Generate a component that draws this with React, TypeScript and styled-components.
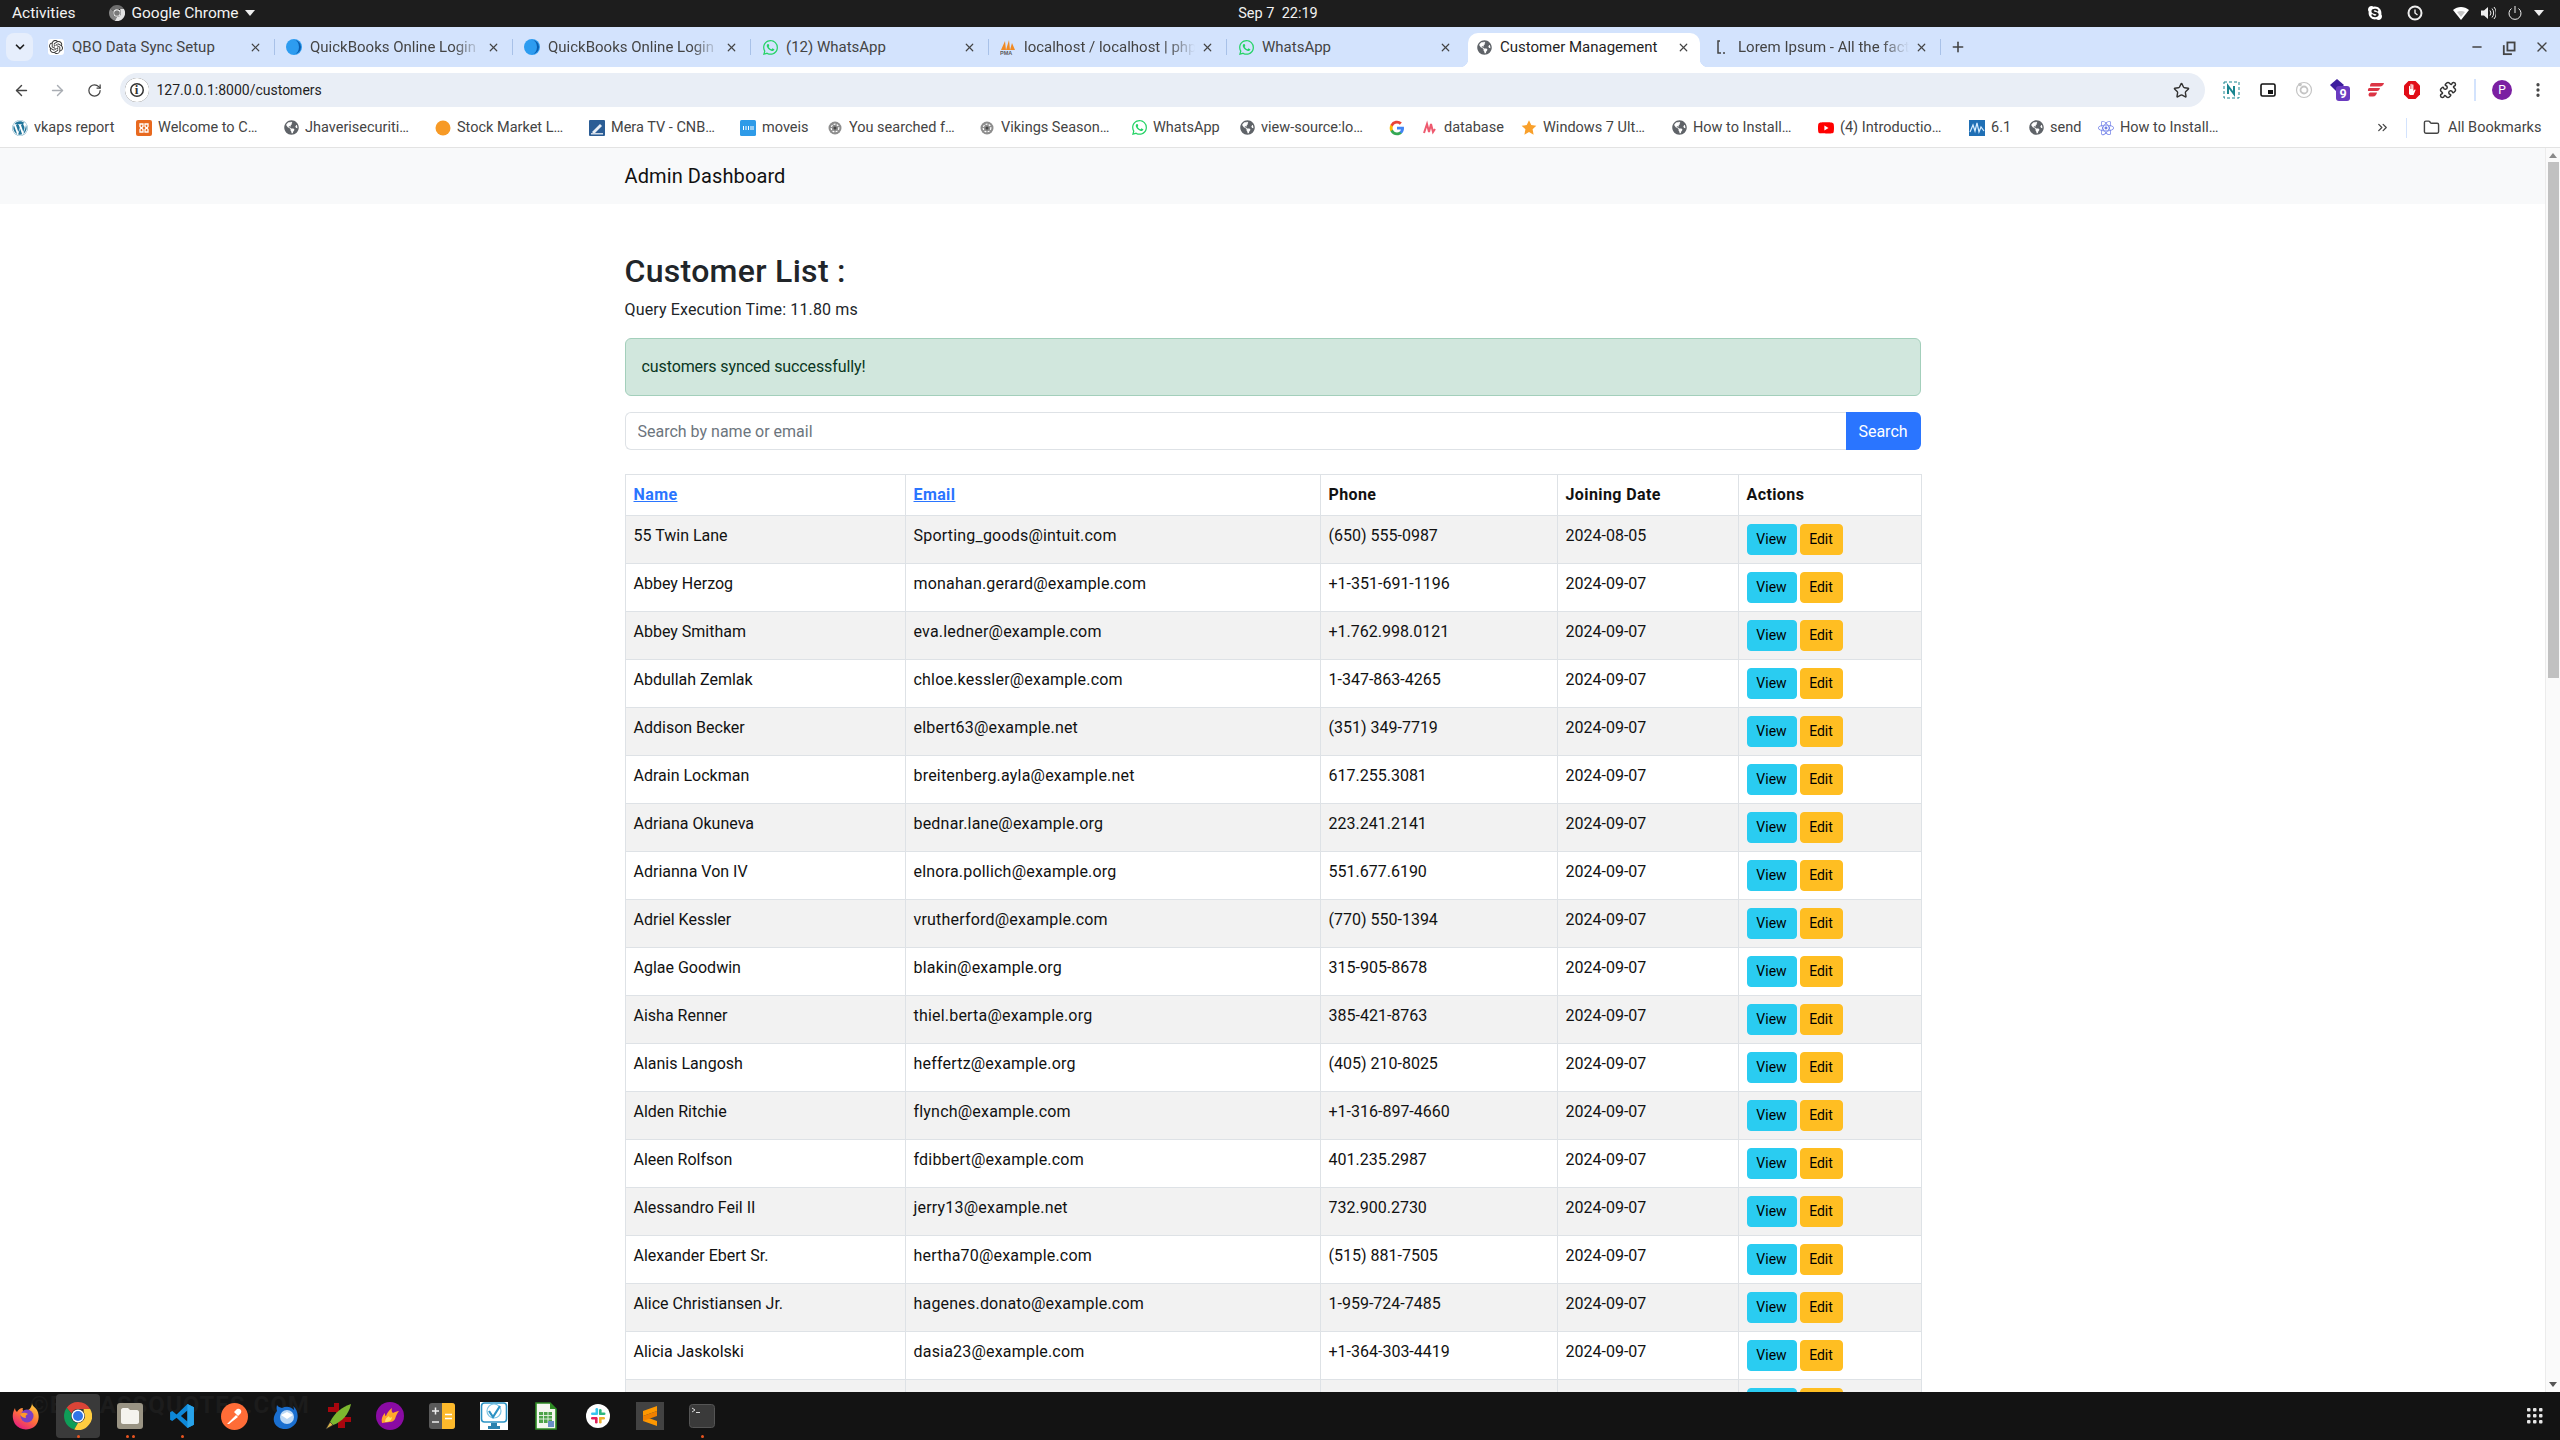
import React from "react";
import styled, { createGlobalStyle } from "styled-components";
import {
  ArrowLeft,
  ArrowRight,
  ChevronDown,
  ChevronsRight,
  Folder,
  Minus,
  MoreVertical,
  Plus,
  Puzzle,
  RotateCw,
  Star,
  X,
} from "lucide-react";
import { FaGlobeAmericas, FaSkype, FaWordpress } from "react-icons/fa";
import { SiOpenai, SiReact, SiWhatsapp, SiYoutube } from "react-icons/si";

const FONT = `Roboto, "Noto Sans", sans-serif`;

const GlobalStyle = createGlobalStyle`
  html, body {
    margin: 0;
    padding: 0;
    height: 100%;
    overflow: hidden;
    background: #fff;
  }
  * { box-sizing: border-box; }
  body {
    font-family: ${FONT};
    font-size: 16px;
    color: #212529;
  }
`;

const customers = [
  ["55 Twin Lane", "Sporting_goods@intuit.com", "(650) 555-0987", "2024-08-05"],
  ["Abbey Herzog", "monahan.gerard@example.com", "+1-351-691-1196", "2024-09-07"],
  ["Abbey Smitham", "eva.ledner@example.com", "+1.762.998.0121", "2024-09-07"],
  ["Abdullah Zemlak", "chloe.kessler@example.com", "1-347-863-4265", "2024-09-07"],
  ["Addison Becker", "elbert63@example.net", "(351) 349-7719", "2024-09-07"],
  ["Adrain Lockman", "breitenberg.ayla@example.net", "617.255.3081", "2024-09-07"],
  ["Adriana Okuneva", "bednar.lane@example.org", "223.241.2141", "2024-09-07"],
  ["Adrianna Von IV", "elnora.pollich@example.org", "551.677.6190", "2024-09-07"],
  ["Adriel Kessler", "vrutherford@example.com", "(770) 550-1394", "2024-09-07"],
  ["Aglae Goodwin", "blakin@example.org", "315-905-8678", "2024-09-07"],
  ["Aisha Renner", "thiel.berta@example.org", "385-421-8763", "2024-09-07"],
  ["Alanis Langosh", "heffertz@example.org", "(405) 210-8025", "2024-09-07"],
  ["Alden Ritchie", "flynch@example.com", "+1-316-897-4660", "2024-09-07"],
  ["Aleen Rolfson", "fdibbert@example.com", "401.235.2987", "2024-09-07"],
  ["Alessandro Feil II", "jerry13@example.net", "732.900.2730", "2024-09-07"],
  ["Alexander Ebert Sr.", "hertha70@example.com", "(515) 881-7505", "2024-09-07"],
  ["Alice Christiansen Jr.", "hagenes.donato@example.com", "1-959-724-7485", "2024-09-07"],
  ["Alicia Jaskolski", "dasia23@example.com", "+1-364-303-4419", "2024-09-07"],
  ["", "", "", ""],
];

/* ---------- small favicons ---------- */

const Globe = () => <FaGlobeAmericas size={15} color="#5f6368" />;

const QuickBooksDrop = () => (
  <svg width="16" height="16" viewBox="0 0 16 16">
    <circle cx="8" cy="8" r="8" fill="#2d9cf0" />
    <path d="M8 1a7 7 0 0 1 0 14 5 7 0 0 0 0-14z" fill="#0b5cad" />
  </svg>
);

const Pma = () => (
  <svg width="16" height="16" viewBox="0 0 16 16">
    <path d="M1 11 5 2l1 9zM6 11l3-10 1 10zM10 11l2-7 3 7z" fill="#f08a24" />
    <text x="0" y="16" fontSize="5.5" fontWeight="700" fill="#5a5a5a" fontFamily="Liberation Sans, sans-serif">PMA</text>
  </svg>
);

const LoremMark = () => (
  <svg width="16" height="16" viewBox="0 0 16 16" fill="none" stroke="#444" strokeWidth="1.5">
    <path d="M6 2H4v12h3M9 14h2" />
  </svg>
);

const Xampp = () => (
  <svg width="16" height="16" viewBox="0 0 16 16">
    <rect width="16" height="16" rx="2" fill="#e8691f" />
    <path d="M4 4h3v2.500L5.500 8 7 9.500V12H4V9.500L5 8 4 6.500zM12 4H9v2.500L10.500 8 9 9.500V12h3V9.500L11 8l1-1.500z" fill="none" stroke="#fff" strokeWidth="1.300" />
  </svg>
);

const OrangeDot = () => (
  <svg width="16" height="16" viewBox="0 0 16 16">
    <circle cx="8" cy="8" r="7.500" fill="#f79a26" />
  </svg>
);

const MeraTv = () => (
  <svg width="16" height="16" viewBox="0 0 16 16">
    <rect width="16" height="16" rx="1" fill="#2b5d95" />
    <path d="M3 12 11 4l2 2-8 8z" fill="#e8eef5" />
    <rect x="2" y="13" width="12" height="1.500" fill="#cfd9e5" />
  </svg>
);

const Moveis = () => (
  <svg width="16" height="16" viewBox="0 0 16 16">
    <rect width="16" height="16" rx="1.500" fill="#2e9be8" />
    <path d="M3.500 6v4M6 6v4M8.500 6v4M11 6v4M13 6v4" stroke="#fff" strokeWidth="1" />
  </svg>
);

const Film = () => (
  <svg width="16" height="16" viewBox="0 0 16 16">
    <circle cx="8" cy="8" r="6.500" fill="#8d8d8d" />
    <circle cx="8" cy="8" r="3.800" fill="none" stroke="#fff" strokeWidth="1.200" strokeDasharray="2 1.200" />
    <circle cx="8" cy="8" r="1.500" fill="#444" />
  </svg>
);

const GoogleG = () => (
  <svg width="16" height="16" viewBox="0 0 24 24">
    <path d="M22.500 12.200c0-.8-.1-1.500-.2-2.200H12v4.200h5.900a5 5 0 0 1-2.200 3.300v2.700h3.500c2.100-1.900 3.300-4.700 3.300-8z" fill="#4285f4" />
    <path d="M12 23c3 0 5.400-1 7.200-2.700l-3.500-2.700c-1 .7-2.200 1-3.700 1-2.900 0-5.300-1.900-6.200-4.500H2.200v2.800A11 11 0 0 0 12 23z" fill="#34a853" />
    <path d="M5.800 14.100a6.600 6.600 0 0 1 0-4.200V7.100H2.200a11 11 0 0 0 0 9.800z" fill="#fbbc05" />
    <path d="M12 5.400c1.600 0 3.100.6 4.200 1.600l3.100-3.100A11 11 0 0 0 2.200 7.100l3.600 2.800C6.700 7.300 9.100 5.400 12 5.400z" fill="#ea4335" />
  </svg>
);

const DatabaseMark = () => (
  <svg width="16" height="16" viewBox="0 0 16 16" fill="none" stroke="#ee5a6f" strokeWidth="2">
    <path d="M2 13 5 4l2 8 2-8 2 8 2-3" />
  </svg>
);

const StarFav = () => (
  <svg width="17" height="17" viewBox="0 0 24 24">
    <path d="m12 1 3.400 7.300 7.600 1-5.600 5.400 1.500 8L12 18.800 5.100 22.700l1.500-8L1 9.300l7.600-1z" fill="#f9a02b" />
  </svg>
);

const Chart61 = () => (
  <svg width="16" height="16" viewBox="0 0 16 16">
    <rect width="16" height="16" fill="#1f6fb5" />
    <path d="M1 12 4 5l2 6 2-8 2 9 2-5 3 4" fill="none" stroke="#d5ecff" strokeWidth="1.200" />
  </svg>
);

/* ---------- toolbar extensions ---------- */

const NotionClip = () => (
  <svg width="18" height="18" viewBox="0 0 18 18" fill="none">
    <rect x="1" y="1" width="15" height="16" stroke="#19858f" strokeWidth="1" strokeDasharray="3 2" />
    <path d="M5 13V5l6 8V5" stroke="#19858f" strokeWidth="2" />
  </svg>
);

const PipIcon = () => (
  <svg width="16" height="14" viewBox="0 0 16 14">
    <rect x="1" y="1" width="14" height="12" rx="1.500" fill="none" stroke="#111" strokeWidth="1.600" />
    <rect x="8" y="7" width="5" height="4" fill="#111" />
  </svg>
);

const RingIcon = () => (
  <svg width="18" height="18" viewBox="0 0 18 18" fill="none" stroke="#c4c4c4" strokeWidth="1.200">
    <circle cx="9" cy="9" r="7.500" />
    <circle cx="9" cy="9" r="3.500" strokeWidth="1.800" />
    <circle cx="5" cy="3.500" r="1.200" fill="#c4c4c4" />
  </svg>
);

const StackBadge = () => (
  <svg width="24" height="24" viewBox="0 0 24 24">
    <path d="M9 1l7 6-7 7-7-7z" fill="#3d1d9e" />
    <path d="M3 9l6 6 3-3v6z" fill="#3d1d9e" />
    <rect x="8" y="8" width="14" height="15" rx="3" fill="#6a3bc0" />
    <text x="15" y="20" textAnchor="middle" fontSize="12.500" fontWeight="700" fill="#fff" fontFamily="Roboto, sans-serif">9</text>
  </svg>
);

const ExpressIcon = () => (
  <svg width="18" height="16" viewBox="0 0 18 16" fill="#dc3545">
    <path d="M5 1h12c-.5 2-2 3.500-4 3.500H3C3 2.500 3.500 1 5 1z" />
    <path d="M2 6h11c-.4 2-1.500 3-3 3H1C.8 7.500 1 6.500 2 6zM3 10.500h7c-.4 2-1.500 4-4 4H3c-1.500 0-2.300-2.800 0-4z" />
  </svg>
);

const StopHand = () => (
  <svg width="18" height="20" viewBox="0 0 18 20">
    <path d="M5.500 1h7L17 5.500v9L12.500 19h-7L1 14.500v-9z" fill="#e10d17" />
    <path d="M6 14V6.500c0-1 1-1 1 0V9h.500V4.500c0-1 1.200-1 1.200 0V9h.500V5c0-1 1.200-1 1.200 0v6l1-1.200c.8-.6 1.400 0 1 .8L10.500 15H7z" fill="#fff" />
  </svg>
);

/* ---------- dock icons ---------- */

const ChromeLogo = ({ size = 28 }: { size?: number }) => (
  <svg width={size} height={size} viewBox="0 0 24 24">
    <path d="M12 0a12 12 0 0 1 10.400 6H12a6 6 0 0 0-5.600 3.800L2.300 5A12 12 0 0 1 12 0z" fill="#db4437" />
    <path d="M2.300 5l4.100 4.800a6 6 0 0 0 5.600 8.200l-3.200 5.600A12 12 0 0 1 2.300 5z" fill="#0f9d58" />
    <path d="M22.400 6A12 12 0 0 1 8.800 23.600L12 18a6 6 0 0 0 5-9.300l-.2-2.700z" fill="#ffcd40" />
    <circle cx="12" cy="12" r="5.500" fill="#fff" />
    <circle cx="12" cy="12" r="4.300" fill="#2f74e8" />
  </svg>
);

const FirefoxLogo = () => (
  <svg width="28" height="28" viewBox="0 0 28 28">
    <defs>
      <linearGradient id="ffx" x1="0.800" y1="0" x2="0.200" y2="1">
        <stop offset="0" stopColor="#ffd23e" />
        <stop offset="0.500" stopColor="#ff7139" />
        <stop offset="1" stopColor="#e31587" />
      </linearGradient>
    </defs>
    <path d="M20 1c0 3 3 4 5 7 3 6 2 13-3 17-6 4-15 3-19-3C0 17 0 11 3 6c0 2 1 3 2 4 1-2 3-4 6-4-1 2 0 3 2 3 3 0 7-3 7-8z" fill="url(#ffx)" />
    <circle cx="15" cy="14" r="6.500" fill="#7b3fc4" />
    <path d="M8 12c3-2 6-1 8 0-2 1-3 2-2 4-2 0-5-1-6-4z" fill="#ff9a2a" />
  </svg>
);

const FilesLogo = () => (
  <svg width="26" height="26" viewBox="0 0 26 26">
    <rect width="26" height="26" rx="3" fill="#9a9484" />
    <path d="M4 7c0-1 1-2 2-2h5l2 2h7c1 0 2 1 2 2v10c0 1-1 2-2 2H6c-1 0-2-1-2-2z" fill="#f5f3ee" />
  </svg>
);

const CodeLogo = () => (
  <svg width="26" height="26" viewBox="0 0 24 24">
    <path d="M17 1 23 4v16l-6 3-10-9.500-4 3.200L1 15.500v-7L3 7.300l4 3.200zM17 7l-6 5 6 5z" fill="#0e88d8" fillRule="evenodd" />
    <path d="M17 1 23 4v16l-6 3z" fill="#28a3ea" />
  </svg>
);

const PostmanLogo = () => (
  <svg width="27" height="27" viewBox="0 0 27 27">
    <circle cx="13.500" cy="13.500" r="13.500" fill="#ff6c37" />
    <path d="M6 21 15 12l2 2-9 7zM16 6a3 3 0 0 1 4 4l-3 3-4-4z" fill="#fff" />
  </svg>
);

const ThunderbirdLogo = () => (
  <svg width="28" height="28" viewBox="0 0 28 28">
    <path d="M5 3c-1 4 0 5 0 6-5 6-4 13 1 16 6 4 14 2 18-4 3-6 2-13-3-17 1 2 1 3 1 4-4-4-8-4-12-2-2-1-4-1-5-3z" fill="#1a6fd0" />
    <circle cx="15" cy="15" r="7" fill="#bcd8f5" />
    <path d="M9 13l6 4 6-4-6-3z" fill="#fff" />
  </svg>
);

const QuillLogo = () => (
  <svg width="28" height="28" viewBox="0 0 28 28">
    <g fill="#a8060e">
      <rect x="10" y="1" width="5" height="4" />
      <rect x="4" y="5" width="11" height="5" />
      <rect x="12" y="10" width="6" height="5" />
      <rect x="17" y="15" width="10" height="5" />
      <rect x="14" y="19" width="7" height="7" />
    </g>
    <path d="M27 2C18 5 11 10 6 20l3 3C18 20 25 12 27 2z" fill="#7cb82f" />
    <path d="M6 20l-4 7 7-4z" fill="#e0b84a" stroke="#333" strokeWidth=".6" />
  </svg>
);

const FlameLogo = () => (
  <svg width="28" height="28" viewBox="0 0 28 28">
    <circle cx="14" cy="14" r="14" fill="#8a0ba3" />
    <path d="M6 21c-1-5 1-8 3-10 0 2 0 3 1 3 1-3 3-6 6-8-1 3 0 4 1 5 2-1 4-2 6-2-2 2-3 5-4 8-1 2-3 3-5 3-3 0-6 1-8 1z" fill="#ffa62b" />
    <path d="M9 20c0-3 2-5 4-6 0 2 2 2 3 1 0 3-3 5-7 5z" fill="#ffe36b" />
  </svg>
);

const CalcLogo = () => (
  <svg width="26" height="26" viewBox="0 0 26 26">
    <rect width="26" height="26" rx="3" fill="#5a5a5a" />
    <path d="M13 0h10a3 3 0 0 1 3 3v20a3 3 0 0 1-3 3H13z" fill="#fdb92b" />
    <path d="M3 8h7M6.500 4.500v7M3 19h7" stroke="#eee" strokeWidth="1.500" />
    <path d="M16 11.500h7M16 15.500h7" stroke="#fff" strokeWidth="1.500" />
  </svg>
);

const MonitorCheckLogo = () => (
  <svg width="28" height="28" viewBox="0 0 28 28">
    <rect width="28" height="28" fill="#fff" />
    <rect x="1.500" y="1" width="25" height="19" rx="3" fill="none" stroke="#2b92c4" strokeWidth="1.600" />
    <circle cx="14" cy="9" r="7" fill="none" stroke="#7cc4e4" strokeWidth="1.200" />
    <path d="M9 9l4 6 7-11" fill="none" stroke="#2b92c4" strokeWidth="2.200" />
    <path d="M11 21h6v3h3v3H8v-3h3z" fill="#2b82ae" />
  </svg>
);

const SheetLogo = () => (
  <svg width="22" height="28" viewBox="0 0 22 28">
    <path d="M1 1h14l6 6v20H1z" fill="#f4f7ef" stroke="#2e8b24" strokeWidth="1.600" />
    <path d="M15 1l6 6h-6z" fill="#2e8b24" />
    <path d="M4 10h13v11H4z" fill="#4ea34a" />
    <path d="M4 13.500h13M4 17h13M8.500 10v11M13 10v11" stroke="#e9f3e6" strokeWidth=".9" />
    <rect x="13" y="19" width="6" height="6" fill="#6a8fc6" />
  </svg>
);

const SlackLogo = () => (
  <svg width="24" height="24" viewBox="0 0 24 24">
    <circle cx="12" cy="12" r="12" fill="#fff" />
    <rect x="9.500" y="4" width="2.600" height="7" rx="1.300" fill="#36c5f0" />
    <rect x="5" y="8.500" width="6" height="2.600" rx="1.300" fill="#36c5f0" />
    <rect x="13" y="5" width="2.600" height="6" rx="1.300" fill="#2eb67d" />
    <rect x="13" y="8.500" width="6.500" height="2.600" rx="1.300" fill="#2eb67d" />
    <rect x="13" y="13" width="6" height="2.600" rx="1.300" fill="#ecb22e" />
    <rect x="13" y="13" width="2.600" height="6.500" rx="1.300" fill="#ecb22e" />
    <rect x="5" y="13" width="6" height="2.600" rx="1.300" fill="#e01e5a" />
    <rect x="9" y="13" width="2.600" height="6.500" rx="1.300" fill="#e01e5a" />
  </svg>
);

const SublimeLogo = () => (
  <svg width="28" height="28" viewBox="0 0 28 28">
    <rect width="28" height="28" fill="#424242" />
    <path d="M7 9 21 4v5L7 14zM7 14l14 5v5L7 19z" fill="#ff9800" />
    <path d="M7 14l14-5v5L7 19z" fill="#f08000" />
  </svg>
);

const TerminalLogo = () => (
  <svg width="26" height="24" viewBox="0 0 26 24">
    <rect x=".5" y=".5" width="25" height="23" rx="3" fill="#3a3a3a" stroke="#555" />
    <path d="M3 4l3 2-3 2M7 8.500h4" fill="none" stroke="#ddd" strokeWidth="1" />
  </svg>
);

const AppGrid = () => (
  <svg width="18" height="18" viewBox="0 0 18 18" fill="#e6e6e6">
    {[1, 7, 13].flatMap((y) =>
      [1, 7, 13].map((x) => <rect key={`${x}-${y}`} x={x} y={y} width="3.500" height="3.500" rx="1" />)
    )}
  </svg>
);

/* ---------- tray icons ---------- */

const ClockTray = () => (
  <svg width="16" height="16" viewBox="0 0 16 16" fill="none" stroke="#eee">
    <circle cx="8" cy="8" r="6.500" strokeWidth="2" />
    <path d="M8 4.500V8l2.500 2" strokeWidth="1.400" />
  </svg>
);

const WifiTray = () => (
  <svg width="16" height="14" viewBox="0 0 16 14">
    <path d="M0 4c4.500-4 11.500-4 16 0l-8 10z" fill="#fff" />
    <path d="M4 6c2.500-1.500 5.500-1.500 8 0l-4 5z" fill="#1d1d1d" opacity=".25" />
  </svg>
);

const SpeakerTray = () => (
  <svg width="16" height="16" viewBox="0 0 16 16" fill="none" stroke="#eee">
    <path d="M1 5.500h3L8 2v12L4 10.500H1z" fill="#eee" stroke="none" />
    <path d="M10 5.500a4 4 0 0 1 0 5M12 3.500a7 7 0 0 1 0 9M14 2a9 9 0 0 1 0 12" strokeWidth="1" />
  </svg>
);

const PowerTray = () => (
  <svg width="16" height="16" viewBox="0 0 16 16" fill="none" stroke="#eee" strokeWidth="1">
    <path d="M8 1v7M4.500 3.500a6 6 0 1 0 7 0" />
  </svg>
);

const Caret = styled.span`
  width: 0;
  height: 0;
  border-left: 5px solid transparent;
  border-right: 5px solid transparent;
  border-top: 6px solid #eee;
`;

const IconPlate = styled.span`
  display: flex;
  align-items: center;
  justify-content: center;
  width: 16px;
  height: 16px;
  background: #fff;
  border-radius: 3px;
`;

/* ---------- data for the browser chrome ---------- */

const tabs: { title: string; icon: React.ReactNode; active?: boolean; fade?: boolean; noSep?: boolean }[] = [
  { title: "QBO Data Sync Setup", icon: <IconPlate><SiOpenai size={14} color="#333" /></IconPlate> },
  { title: "QuickBooks Online Login", icon: <QuickBooksDrop />, fade: true },
  { title: "QuickBooks Online Login", icon: <QuickBooksDrop />, fade: true },
  { title: "(12) WhatsApp", icon: <SiWhatsapp size={15} color="#25d366" /> },
  { title: "localhost / localhost | phpMyAdmin", icon: <Pma />, fade: true },
  { title: "WhatsApp", icon: <SiWhatsapp size={15} color="#25d366" />, noSep: true },
  { title: "Customer Management", icon: <Globe />, active: true },
  { title: "Lorem Ipsum - All the facts", icon: <LoremMark />, fade: true },
];

const bookmarks: { label?: string; width?: number; icon: React.ReactNode }[] = [
  { label: "vkaps report", width: 85, icon: <FaWordpress size={16} color="#21759b" /> },
  { label: "Welcome to C…", width: 108, icon: <Xampp /> },
  { label: "Jhaverisecuriti…", width: 113, icon: <Globe /> },
  { label: "Stock Market L…", width: 115, icon: <OrangeDot /> },
  { label: "Mera TV - CNB…", width: 112, icon: <MeraTv /> },
  { label: "moveis", width: 48, icon: <Moveis /> },
  { label: "You searched f…", width: 113, icon: <Film /> },
  { label: "Vikings Season…", width: 113, icon: <Film /> },
  { label: "WhatsApp", width: 69, icon: <SiWhatsapp size={15} color="#25d366" /> },
  { label: "view-source:lo…", width: 111, icon: <Globe /> },
  { icon: <GoogleG /> },
  { label: "database", width: 60, icon: <DatabaseMark /> },
  { label: "Windows 7 Ult…", width: 111, icon: <StarFav /> },
  { label: "How to Install…", width: 108, icon: <Globe /> },
  { label: "(4) Introductio…", width: 112, icon: <SiYoutube size={16} color="#f00" /> },
  { label: "6.1", width: 20, icon: <Chart61 /> },
  { label: "send", width: 31, icon: <Globe /> },
  { label: "How to Install…", width: 107, icon: <SiReact size={16} color="#6f7fe8" /> },
];

const dockApps: { icon: React.ReactNode; dots?: number; focused?: boolean }[] = [
  { icon: <FirefoxLogo /> },
  { icon: <ChromeLogo />, dots: 1, focused: true },
  { icon: <FilesLogo />, dots: 2 },
  { icon: <CodeLogo />, dots: 1 },
  { icon: <PostmanLogo /> },
  { icon: <ThunderbirdLogo /> },
  { icon: <QuillLogo /> },
  { icon: <FlameLogo /> },
  { icon: <CalcLogo /> },
  { icon: <MonitorCheckLogo /> },
  { icon: <SheetLogo /> },
  { icon: <SlackLogo /> },
  { icon: <SublimeLogo /> },
  { icon: <TerminalLogo />, dots: 1 },
];

const App = () => {
  return (
    <>
      <GlobalStyle />
      <Screen>
        <TopBar>
          <TopLeft>
            <span>Activities</span>
            <AppMenu>
              <GreyIcon>
                <ChromeLogo size={16} />
              </GreyIcon>
              Google Chrome
              <Caret />
            </AppMenu>
          </TopLeft>
          <Clock>Sep 7&nbsp; 22:19</Clock>
          <Tray>
            <TrayGroup $gap={24}>
              <FaSkype size={16} color="#fff" />
              <ClockTray />
            </TrayGroup>
            <TrayGroup $gap={11}>
              <WifiTray />
              <SpeakerTray />
              <PowerTray />
              <Caret />
            </TrayGroup>
          </Tray>
        </TopBar>

        <TabStrip>
          <TabMenu>
            <ChevronDown size={14} strokeWidth={3} color="#1f1f1f" />
          </TabMenu>
          {tabs.map((tab, i) => (
            <Tab key={i} $active={tab.active} $noSep={tab.noSep}>
              <TabIcon>{tab.icon}</TabIcon>
              <TabTitle $fade={tab.fade}>{tab.title}</TabTitle>
              <X size={13} strokeWidth={2.2} color="#444" />
            </Tab>
          ))}
          <NewTab>
            <Plus size={16} strokeWidth={2.4} color="#444" />
          </NewTab>
          <WindowButtons>
            <Minus size={14} strokeWidth={2.4} color="#444" />
            <Restore />
            <X size={16} strokeWidth={2} color="#444" />
          </WindowButtons>
        </TabStrip>

        <Toolbar>
          <NavButton><ArrowLeft size={17} color="#444" /></NavButton>
          <NavButton><ArrowRight size={17} color="#a9adb3" /></NavButton>
          <NavButton><RotateCw size={15} color="#444" /></NavButton>
          <Omnibox>
            <InfoBadge>i</InfoBadge>
            <Url>127.0.0.1:8000/customers</Url>
            <Star size={17} color="#333" strokeWidth={2} />
          </Omnibox>
          <Extensions>
            <ExtButton><NotionClip /></ExtButton>
            <ExtButton><PipIcon /></ExtButton>
            <ExtButton><RingIcon /></ExtButton>
            <ExtButton><StackBadge /></ExtButton>
            <ExtButton><ExpressIcon /></ExtButton>
            <ExtButton><StopHand /></ExtButton>
            <ExtButton><Puzzle size={18} color="#333" /></ExtButton>
            <ToolbarDivider />
            <ExtButton><Avatar>P</Avatar></ExtButton>
            <ExtButton><MoreVertical size={18} color="#444" strokeWidth={2.4} /></ExtButton>
          </Extensions>
        </Toolbar>

        <BookmarkBar>
          {bookmarks.map((b, i) => (
            <Bookmark key={i}>
              <BookmarkIcon>{b.icon}</BookmarkIcon>
              {b.label && <BookmarkLabel $w={b.width}>{b.label}</BookmarkLabel>}
            </Bookmark>
          ))}
          <BookmarkEnd>
            <ChevronsRight size={15} color="#444" />
            <BarDivider />
            <Bookmark>
              <Folder size={17} color="#444" />
              <AllBookmarks $w={97}>All Bookmarks</AllBookmarks>
            </Bookmark>
          </BookmarkEnd>
        </BookmarkBar>

        <Viewport>
          <Page>
            <Navbar>
              <Container>
                <Brand>Admin Dashboard</Brand>
              </Container>
            </Navbar>
            <Main>
              <Title>Customer List :</Title>
              <QueryTime>Query Execution Time: 11.80 ms</QueryTime>
              <Alert>customers synced successfully!</Alert>
              <SearchRow>
                <SearchInput placeholder="Search by name or email" />
                <SearchButton>Search</SearchButton>
              </SearchRow>
              <Table>
                <colgroup>
                  <col width="280" />
                  <col width="415" />
                  <col width="237" />
                  <col width="181" />
                  <col width="183" />
                </colgroup>
                <thead>
                  <tr>
                    <Th><SortLink href="#">Name</SortLink></Th>
                    <Th><SortLink href="#">Email</SortLink></Th>
                    <Th>Phone</Th>
                    <Th>Joining Date</Th>
                    <Th>Actions</Th>
                  </tr>
                </thead>
                <tbody>
                  {customers.map((c, i) => (
                    <Row key={i} $striped={i % 2 === 0}>
                      <Td>{c[0]}</Td>
                      <EmailCell>{c[1]}</EmailCell>
                      <Td>{c[2]}</Td>
                      <Td>{c[3]}</Td>
                      <Td>
                        <ActionButton $bg="#2accf1" $w={50}>View</ActionButton>
                        <ActionButton $bg="#ffbe22" $w={43}>Edit</ActionButton>
                      </Td>
                    </Row>
                  ))}
                </tbody>
              </Table>
            </Main>
          </Page>
          <ScrollTrack>
            <ScrollArrow $up />
            <ScrollThumb />
            <ScrollArrow />
          </ScrollTrack>
        </Viewport>

        <Dock>
          <Watermark>©BADASSQUOTES.COM</Watermark>
          {dockApps.map((app, i) => (
            <DockSlot key={i} $focused={app.focused}>
              {app.icon}
              <DotRow>
                {Array.from({ length: app.dots || 0 }).map((_, d) => (
                  <Dot key={d} />
                ))}
              </DotRow>
            </DockSlot>
          ))}
          <DockEnd>
            <AppGrid />
          </DockEnd>
        </Dock>
      </Screen>
    </>
  );
};
export default App;

const Screen = styled.div`
  display: flex;
  flex-direction: column;
  width: 100vw;
  height: 100vh;
  overflow: hidden;
`;

const TopBar = styled.div`
  display: grid;
  grid-template-columns: 1fr auto 1fr;
  align-items: center;
  height: 27px;
  padding: 0 16px 1px 12px;
  background: #1d1d1d;
  color: #f2f2f2;
  font-size: 14.500px;
`;

const TopLeft = styled.div`
  display: flex;
  align-items: center;
  gap: 34px;
  font-size: 15.500px;
`;

const AppMenu = styled.div`
  display: flex;
  align-items: center;
  gap: 6px;
`;

const GreyIcon = styled.span`
  display: flex;
  filter: grayscale(1) brightness(1.1);
`;

const Clock = styled.div`
  text-align: center;
`;

const Tray = styled.div`
  display: flex;
  justify-content: flex-end;
  align-items: center;
  gap: 30px;
`;

const TrayGroup = styled.div<{ $gap: number }>`
  display: flex;
  align-items: center;
  gap: ${(p) => p.$gap}px;
`;

const TabStrip = styled.div`
  display: flex;
  align-items: flex-end;
  height: 40px;
  padding-left: 6px;
  background: #d3e3fd;
`;

const TabMenu = styled.div`
  display: flex;
  align-items: center;
  justify-content: center;
  align-self: flex-start;
  width: 27px;
  height: 28px;
  margin: 6px 4px 0 0;
  background: #e6eefc;
  border-radius: 8px;
`;

const Tab = styled.div<{ $active?: boolean; $noSep?: boolean }>`
  position: relative;
  display: flex;
  align-items: center;
  flex: 0 0 ${(p) => (p.$active ? 232 : 238)}px;
  min-width: 0;
  height: 34px;
  margin: ${(p) => (p.$active ? "0 3px" : "0")};
  padding: ${(p) => (p.$active ? "0 10px 6px 8px" : "0 13px 6px 11px")};
  font-size: 15px;
  color: ${(p) => (p.$active ? "#1f1f1f" : "#444")};
  background: ${(p) => (p.$active ? "#fff" : "transparent")};
  border-radius: 10px 10px 0 0;
  &::after {
    content: "";
    position: absolute;
    right: 0;
    top: 6px;
    width: 1px;
    height: 16px;
    background: ${(p) => (p.$active || p.$noSep ? "transparent" : "#a8c1e8")};
  }
  ${(p) =>
    p.$active &&
    `
    &::before, &::after {
      content: "";
      position: absolute;
      bottom: 0;
      top: auto;
      width: 8px;
      height: 8px;
    }
    &::before {
      left: -8px;
      background: radial-gradient(circle at 0 0, transparent 8px, #fff 8.5px);
    }
    &::after {
      right: -8px;
      background: radial-gradient(circle at 100% 0, transparent 8px, #fff 8.5px);
    }
  `}
`;

const TabIcon = styled.span`
  display: flex;
  align-items: center;
  justify-content: center;
  flex: 0 0 16px;
  height: 16px;
  margin-right: 8px;
`;

const TabTitle = styled.span<{ $fade?: boolean }>`
  flex: 1;
  min-width: 0;
  overflow: hidden;
  white-space: nowrap;
  margin-right: 6px;
  ${(p) =>
    p.$fade &&
    `mask-image: linear-gradient(to right, #000 84%, transparent 100%);`}
`;

const NewTab = styled.div`
  display: flex;
  align-items: center;
  justify-content: center;
  width: 34px;
  height: 34px;
  padding-bottom: 6px;
`;

const WindowButtons = styled.div`
  display: flex;
  align-items: center;
  gap: 20px;
  margin-left: auto;
  padding: 0 10px 6px 0;
  height: 34px;
`;

const Restore = styled.span`
  position: relative;
  width: 10px;
  height: 11px;
  border: 2px solid #444;
  box-shadow: -2px 2px 0 0 #d3e3fd, -4px 4px 0 0 #444;
  transform: translateX(2px) translateY(-1px) scale(0.9);
`;

const Toolbar = styled.div`
  display: flex;
  align-items: center;
  height: 41px;
  padding: 5px 0 0 3px;
  background: #fff;
  border-radius: 10px 10px 0 0;
`;

const NavButton = styled.div`
  display: flex;
  align-items: center;
  justify-content: center;
  width: 36.500px;
  height: 34px;
`;

const Omnibox = styled.div`
  display: flex;
  align-items: center;
  flex: 1;
  height: 34px;
  margin-left: 7px;
  padding: 0 15px 0 5px;
  background: #e9eef6;
  border-radius: 17px;
`;

const InfoBadge = styled.span`
  display: flex;
  align-items: center;
  justify-content: center;
  width: 24px;
  height: 24px;
  border-radius: 50%;
  background: #fff;
  color: #333;
  font-family: "Liberation Serif", serif;
  font-weight: 700;
  font-size: 13px;
  box-shadow: inset 0 0 0 5px #fff, inset 0 0 0 6.500px #333;
`;

const Url = styled.span`
  flex: 1;
  margin-left: 8px;
  font-size: 14px;
  color: #1f1f1f;
`;

const Extensions = styled.div`
  display: flex;
  align-items: center;
  margin-left: 9px;
  padding-right: 4px;
`;

const ExtButton = styled.div`
  display: flex;
  align-items: center;
  justify-content: center;
  width: 36px;
  height: 34px;
`;

const ToolbarDivider = styled.span`
  width: 2px;
  height: 22px;
  margin: 0 8px;
  background: #d3e3fd;
`;

const Avatar = styled.span`
  display: flex;
  align-items: center;
  justify-content: center;
  width: 20px;
  height: 20px;
  border-radius: 50%;
  background: #7b1fa2;
  color: #fff;
  font-size: 12px;
`;

const BookmarkBar = styled.div`
  display: flex;
  align-items: center;
  gap: 17px;
  height: 40px;
  padding: 0 15px 0 12px;
  background: #fff;
  border-bottom: 1px solid #e3e3e3;
`;

const Bookmark = styled.div`
  display: flex;
  align-items: center;
  gap: 6px;
  font-size: 14.500px;
  color: #444;
`;

const BookmarkIcon = styled.span`
  display: flex;
  align-items: center;
  justify-content: center;
  width: 16px;
  height: 16px;
`;

const BookmarkLabel = styled.span<{ $w?: number }>`
  width: ${(p) => p.$w}px;
  white-space: nowrap;
  overflow: hidden;
`;

const AllBookmarks = styled(BookmarkLabel)`
  margin-left: 2px;
`;

const BookmarkEnd = styled.div`
  display: flex;
  align-items: center;
  gap: 16px;
  margin-left: auto;
`;

const BarDivider = styled.span`
  width: 1px;
  height: 20px;
  background: #d3e3fd;
`;

const Viewport = styled.div`
  display: flex;
  flex: 1;
  min-height: 0;
`;

const Page = styled.div`
  flex: 1;
  min-width: 0;
  overflow: hidden;
`;

const Navbar = styled.nav`
  display: flex;
  align-items: center;
  height: 56px;
  background: #f8f9fa;
`;

const Container = styled.div`
  width: 1296px;
  margin: 0 auto;
`;

const Brand = styled.div`
  font-size: 20px;
  letter-spacing: 0.1px;
  color: #111;
`;

const Main = styled.main`
  width: 1296px;
  margin: 48px auto 0;
`;

const Title = styled.h2`
  margin: 0 0 8px;
  font-size: 32px;
  font-weight: 500;
  line-height: 38.400px;
  letter-spacing: 0.3px;
`;

const QueryTime = styled.p`
  margin: 0 0 16px;
  line-height: 24px;
  letter-spacing: 0.15px;
`;

const Alert = styled.div`
  height: 58px;
  margin-bottom: 16px;
  padding: 16px;
  line-height: 24px;
  letter-spacing: -0.1px;
  color: #0a3622;
  background: #d1e7dd;
  border: 1px solid #a3cfbb;
  border-radius: 6px;
`;

const SearchRow = styled.form`
  display: flex;
  height: 38px;
  margin-bottom: 24px;
`;

const SearchInput = styled.input`
  flex: 1;
  padding: 6px 12px;
  font-family: ${FONT};
  font-size: 16px;
  color: #212529;
  border: 1px solid #dee2e6;
  border-right: 0;
  border-radius: 6px 0 0 6px;
  &::placeholder {
    color: #6c757d;
    opacity: 1;
  }
`;

const SearchButton = styled.button`
  width: 75px;
  font-family: ${FONT};
  font-size: 16px;
  color: #fff;
  background: #2a75ff;
  border: 0;
  border-radius: 0 6px 6px 0;
`;

const Table = styled.table`
  width: 1296px;
  table-layout: fixed;
  border-collapse: collapse;
`;

const Th = styled.th`
  height: 41px;
  padding: 8px;
  text-align: left;
  font-weight: 700;
  line-height: 24px;
  letter-spacing: 0.4px;
  color: #111;
  border: 1px solid #dee2e6;
`;

const SortLink = styled.a`
  color: #2a75ff;
  text-decoration: underline;
`;

const Row = styled.tr<{ $striped: boolean }>`
  background: ${(p) => (p.$striped ? "#f2f2f2" : "#fff")};
`;

const Td = styled.td`
  height: 48px;
  padding: 8px;
  vertical-align: top;
  line-height: 24px;
  color: #111;
  border: 1px solid #dee2e6;
`;

const EmailCell = styled(Td)`
  letter-spacing: 0.2px;
`;

const ActionButton = styled.button<{ $bg: string; $w: number }>`
  width: ${(p) => p.$w}px;
  height: 31px;
  margin-right: 3px;
  padding: 4px 0;
  font-family: ${FONT};
  font-size: 14px;
  line-height: 21px;
  color: #000;
  background: ${(p) => p.$bg};
  border: 1px solid ${(p) => p.$bg};
  border-radius: 4px;
  vertical-align: top;
`;

const ScrollTrack = styled.div`
  display: flex;
  flex-direction: column;
  align-items: center;
  flex: 0 0 15px;
  background: #fafafa;
  border-left: 1px solid #ececec;
`;

const ScrollArrow = styled.span<{ $up?: boolean }>`
  flex: 0 0 auto;
  width: 0;
  height: 0;
  margin: ${(p) => (p.$up ? "5px 0 4px" : "auto 0 5px")};
  border-left: 4px solid transparent;
  border-right: 4px solid transparent;
  ${(p) =>
    p.$up ? "border-bottom: 5px solid #8a8a8a;" : "border-top: 5px solid #555;"}
`;

const ScrollThumb = styled.span`
  width: 11px;
  height: 516px;
  background: #c1c1c1;
`;

const Dock = styled.div`
  position: relative;
  display: flex;
  align-items: center;
  height: 48px;
  background: #131313;
`;

const Watermark = styled.span`
  position: absolute;
  left: 30px;
  top: -1px;
  font-size: 24px;
  font-weight: 700;
  letter-spacing: 1px;
  color: #1c1c1c;
`;

const DockSlot = styled.div<{ $focused?: boolean }>`
  position: relative;
  display: flex;
  align-items: center;
  justify-content: center;
  flex: 0 0 44px;
  height: 44px;
  margin-left: 4px;
  margin-right: 4px;
  border-radius: 4px;
  background: ${(p) => (p.$focused ? "#3a3a3a" : "transparent")};
`;

const DotRow = styled.div`
  position: absolute;
  bottom: 0;
  left: 0;
  right: 0;
  display: flex;
  justify-content: center;
  gap: 3px;
`;

const Dot = styled.span`
  width: 3px;
  height: 3px;
  border-radius: 50%;
  background: #e95420;
`;

const DockEnd = styled.div`
  display: flex;
  margin-left: auto;
  padding-right: 16px;
`;
